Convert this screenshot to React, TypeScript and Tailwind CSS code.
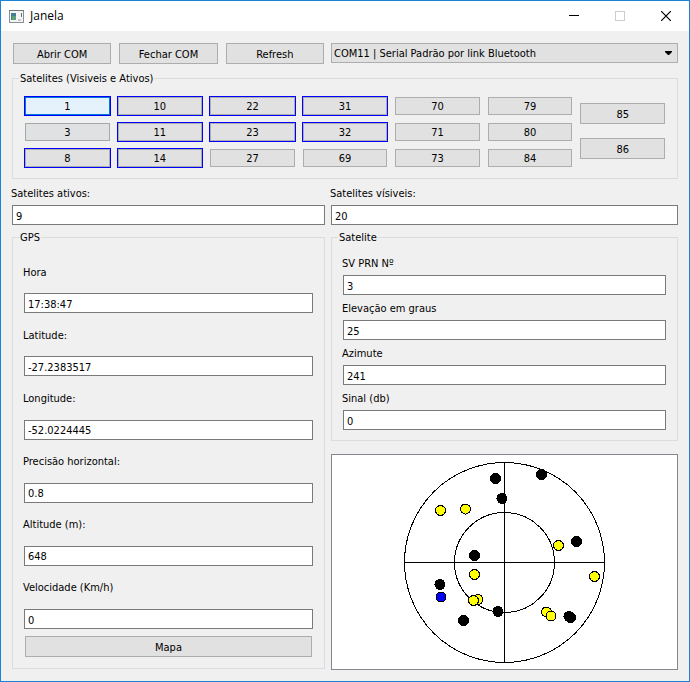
import React, { useState } from "react";

type Sat = { id: number; active?: boolean; hover?: boolean; focus?: boolean };

const columns: Sat[][] = [
  [{ id: 1, active: true, hover: true }, { id: 3, focus: true }, { id: 8, active: true }],
  [{ id: 10, active: true }, { id: 11, active: true }, { id: 14, active: true }],
  [{ id: 22, active: true }, { id: 23, active: true }, { id: 27 }],
  [{ id: 31, active: true }, { id: 32, active: true }, { id: 69 }],
  [{ id: 70 }, { id: 71 }, { id: 73 }],
  [{ id: 79 }, { id: 80 }, { id: 84 }],
];

const gpsFields = [
  { id: "hora", label: "Hora", value: "17:38:47" },
  { id: "latitude", label: "Latitude:", value: "-27.2383517" },
  { id: "longitude", label: "Longitude:", value: "-52.0224445" },
  { id: "precisao", label: "Precisão horizontal:", value: "0.8" },
  { id: "altitude", label: "Altitude (m):", value: "648" },
  { id: "velocidade", label: "Velocidade (Km/h)", value: "0" },
];

const satFields = [
  { id: "prn", label: "SV PRN Nº", value: "3" },
  { id: "elevacao", label: "Elevação em graus", value: "25" },
  { id: "azimute", label: "Azimute", value: "241" },
  { id: "sinal", label: "Sinal (db)", value: "0" },
];

// Sky positions, in plot units
const dots: [number, number, string][] = [
  [163.5, 23.5, "#000"],
  [209.5, 19.5, "#000"],
  [170, 43.5, "#000"],
  [108.5, 55.5, "#ff0"],
  [133.5, 54, "#ff0"],
  [226.5, 90.5, "#ff0"],
  [244.5, 86.5, "#000"],
  [262.5, 121.5, "#ff0"],
  [142.5, 100.5, "#000"],
  [142.5, 119.5, "#ff0"],
  [146, 144.5, "#ff0"],
  [141.5, 145.5, "#ff0"],
  [108, 129.5, "#000"],
  [109, 142, "#00f"],
  [131.5, 165.5, "#000"],
  [166, 156.5, "#000"],
  [214.5, 157, "#ff0"],
  [219, 161, "#ff0"],
  [237, 161.5, "#000"],
  [238.5, 162.5, "#000"],
];

function Button({ children, className = "" }: { children: React.ReactNode; className?: string }) {
  return (
    <button type="button" className={`h-[21px] border border-[#adadad] bg-[#e1e1e1] pt-0.5 text-center ${className}`}>
      {children}
    </button>
  );
}

function SatButton({ sat }: { sat: Sat }) {
  const face = sat.hover
    ? "border-[#0078d7] bg-[#e5f1fb]"
    : sat.focus
      ? "border-[#a3a8ad] bg-[#dfe1e3]"
      : "border-[#adadad] bg-[#e1e1e1]";
  return (
    <div className={`flex h-5 border ${sat.active ? "border-[#0000ff]" : "border-transparent"}`}>
      <button type="button" className={`flex-1 border pt-0.5 leading-[14px] ${face}`}>
        {sat.id}
      </button>
    </div>
  );
}

function Field({ id, label, value, labelClass }: { id: string; label: string; value: string; labelClass: string }) {
  const [text, setText] = useState(value);
  return (
    <>
      <label htmlFor={id} className={`-ml-px flex items-center ${labelClass}`}>
        {label}
      </label>
      <input
        id={id}
        type="text"
        value={text}
        onChange={(e) => setText(e.target.value)}
        className="h-5 w-full min-w-0 border border-[#7a7a7a] bg-white px-[3px] pt-0.5 outline-none"
      />
    </>
  );
}

function Group({ title, children, className = "" }: { title: string; children: React.ReactNode; className?: string }) {
  return (
    <fieldset className={`flex min-w-0 flex-col border border-[#dcdcdc] px-1.5 ${className}`}>
      <legend className="px-px pt-0.5 leading-4">{title}</legend>
      {children}
    </fieldset>
  );
}

function TitleBar() {
  return (
    <header className="flex h-[30px] items-center bg-white pl-2 text-black">
      <svg width="15" height="13" viewBox="0 0 15 13" shapeRendering="crispEdges" aria-hidden="true">
        <rect x="0.5" y="0.5" width="14" height="12" fill="#f4f4f4" stroke="#8a8f92" />
        <path d="M0 0.5H15" stroke="#6f7578" />
        <rect x="2" y="3" width="5" height="7" fill="#3f7f8f" />
        <rect x="3" y="6" width="4" height="4" fill="#5a9f78" />
        <rect x="9" y="9" width="3" height="2" fill="#c8c8c8" />
        <rect x="12" y="3" width="1" height="4" fill="#5a7a70" />
      </svg>
      <h1 className="ml-1.5 flex-1 font-['Open_Sans','Noto_Sans',sans-serif] text-xs">Janela</h1>
      <button type="button" aria-label="Minimizar" className="flex h-full w-[46px] items-center justify-center">
        <svg width="10" height="10" viewBox="0 0 10 10" shapeRendering="crispEdges">
          <path d="M0 4.5H10" stroke="#000" />
        </svg>
      </button>
      <button type="button" aria-label="Maximizar" disabled className="flex h-full w-[46px] items-center justify-center">
        <svg width="10" height="10" viewBox="0 0 10 10" shapeRendering="crispEdges">
          <rect x="0.5" y="0.5" width="9" height="9" fill="none" stroke="#ccc" />
        </svg>
      </button>
      <button type="button" aria-label="Fechar" className="flex h-full w-[46px] items-center justify-center">
        <svg width="10" height="10" viewBox="0 0 10 10">
          <path d="M0 0L10 10M10 0L0 10" stroke="#000" strokeWidth="1.2" />
        </svg>
      </button>
    </header>
  );
}

function SkyPlot() {
  return (
    <div className="mt-[13px] border border-[#828790] bg-white">
      <svg className="block h-[214px] w-full" viewBox="0 0 345 214" shapeRendering="crispEdges" role="img" aria-label="Mapa do céu">
        <g fill="none" stroke="#000">
          <circle cx="172.5" cy="107.5" r="100" />
          <circle cx="172.5" cy="107.5" r="50" />
          <path d="M72.5 107.5H272.5M172.5 7.5V207.5" />
        </g>
        {dots.map(([x, y, fill], i) => (
          <circle key={i} cx={x} cy={y} r="5" fill={fill} stroke="#000" />
        ))}
      </svg>
    </div>
  );
}

export default function App() {
  return (
    <main className="border border-[#1883d7] bg-[#f0f0f0] font-['DejaVu_Sans_Condensed','DejaVu_Sans',sans-serif] text-[11px] leading-4 text-black">
      <TitleBar />
      <div className="px-[11px] pt-3 pb-[11px]">
        <div className="grid grid-cols-[313fr_347fr] gap-x-1.5">
          <div className="grid grid-cols-3 gap-2 px-px">
            <Button>Abrir COM</Button>
            <Button>Fechar COM</Button>
            <Button>Refresh</Button>
          </div>
          <div className="relative">
            <select
              aria-label="Porta serial"
              className="h-5 w-full appearance-none border border-[#adadad] bg-[#e1e1e1] pt-0.5 pr-5 pl-0.5 outline-none"
            >
              <option>COM11 | Serial Padrão por link Bluetooth</option>
            </select>
            <svg className="pointer-events-none absolute top-2 right-1.5" width="7" height="4" viewBox="0 0 7 4" aria-hidden="true">
              <path d="M0 0H7V1L4 4H3L0 1Z" fill="#000" />
            </svg>
          </div>
        </div>

        <Group title="Satelites (Visiveis e Ativos)" className="mt-[5px]">
          <div className="grid grid-cols-7 gap-x-1.5 px-[5px] pt-[9px] pb-2.5">
            {columns.map((col) => (
              <div key={col[0].id} className="flex flex-col gap-1.5">
                {col.map((sat) => (
                  <SatButton key={sat.id} sat={sat} />
                ))}
              </div>
            ))}
            <div className="flex flex-col gap-3.5 px-px pt-[7px]">
              <Button>85</Button>
              <Button>86</Button>
            </div>
          </div>
        </Group>

        <div className="grid grid-cols-[313fr_347fr] gap-x-1.5">
          <div className="flex flex-col">
            <Field id="ativos" label="Satelites ativos:" value="9" labelClass="h-[26px] pt-1" />
          </div>
          <div className="flex flex-col">
            <Field id="visiveis" label="Satelites vísiveis:" value="20" labelClass="h-[26px] pt-1" />
          </div>
        </div>

        <div className="mt-[3px] grid grid-cols-[313fr_347fr] gap-x-1.5">
          <Group title="GPS" className="mb-px">
            <div className="flex flex-1 flex-col px-[5px] pt-1 pb-[11px]">
              {gpsFields.map((f) => (
                <Field key={f.id} {...f} labelClass="flex-1 pt-0.5" />
              ))}
              <Button className="mx-px mt-[7px]">Mapa</Button>
            </div>
          </Group>
          <div className="flex min-w-0 flex-col">
            <Group title="Satelite">
              <div className="flex flex-col px-[5px] pt-1 pb-2.5">
                {satFields.map((f) => (
                  <Field key={f.id} {...f} labelClass="h-[25px] pt-0.5" />
                ))}
              </div>
            </Group>
            <SkyPlot />
          </div>
        </div>
      </div>
    </main>
  );
}
